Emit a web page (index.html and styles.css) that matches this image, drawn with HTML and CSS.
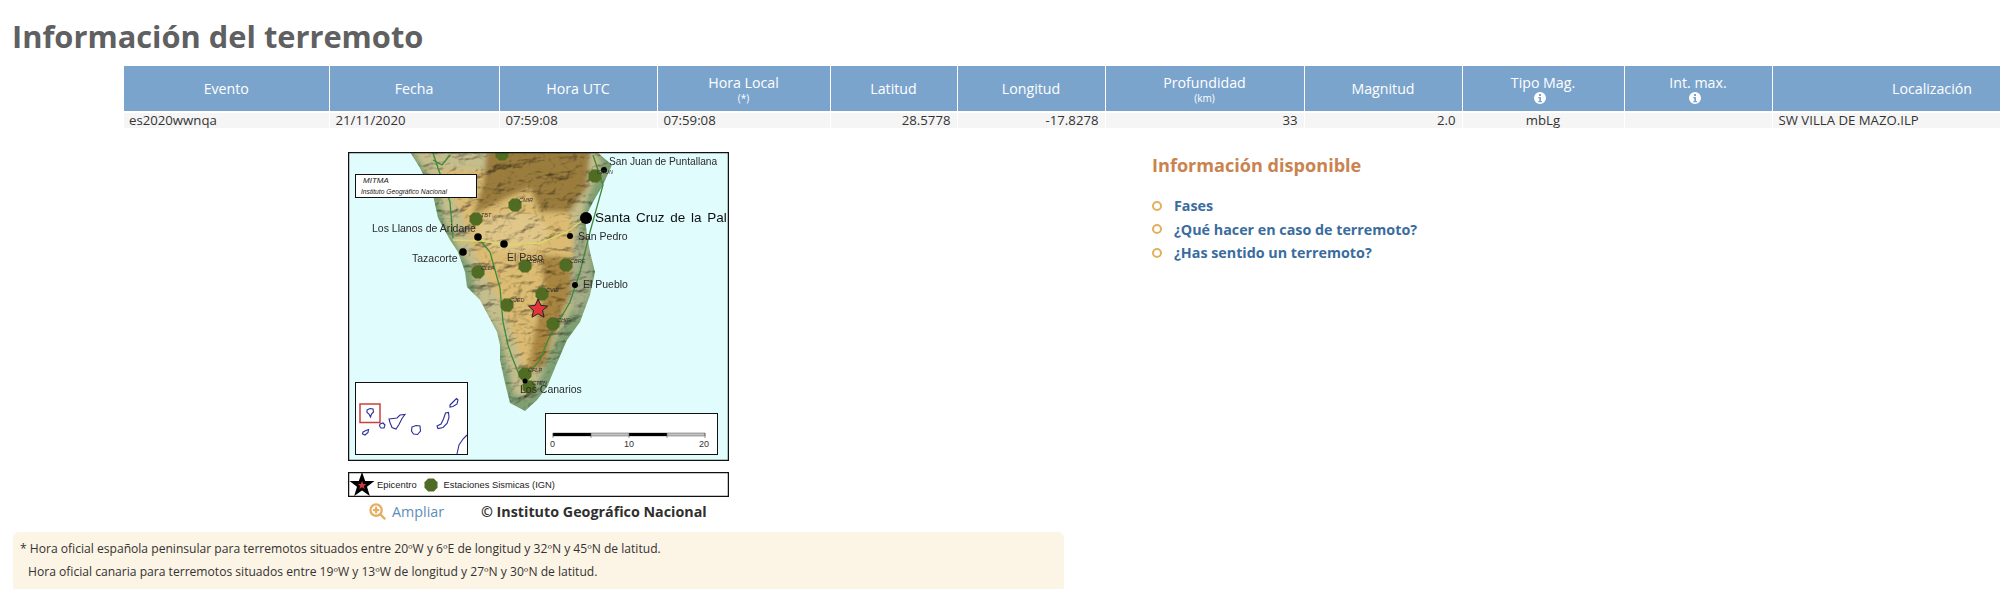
FILE: index.html
```html
<!DOCTYPE html>
<html lang="es">
<head>
<meta charset="utf-8">
<title>Información del terremoto</title>
<link rel="stylesheet" href="styles.css">
</head>
<body>
<h1 class="title">Información del terremoto</h1>
<table class="quake">
<colgroup>
<col class="c1"><col class="c2"><col class="c3"><col class="c4"><col class="c5"><col class="c6"><col class="c7"><col class="c8"><col class="c9"><col class="c10"><col class="c11">
</colgroup>
<thead>
<tr>
<th>Evento</th><th>Fecha</th><th>Hora UTC</th>
<th>Hora Local<small>(*)</small></th>
<th>Latitud</th><th>Longitud</th>
<th>Profundidad<small>(km)</small></th>
<th>Magnitud</th>
<th>Tipo Mag.<svg class="info" viewBox="0 0 12 12"><path fill-rule="evenodd" d="M6 0a6 6 0 1 0 0 12A6 6 0 0 0 6 0zM5 2h2v2H5zM4.300 5H7v4h1v1.200H4.300V9h1V6.200h-1z"/></svg></th>
<th>Int. max.<svg class="info" viewBox="0 0 12 12"><path fill-rule="evenodd" d="M6 0a6 6 0 1 0 0 12A6 6 0 0 0 6 0zM5 2h2v2H5zM4.300 5H7v4h1v1.200H4.300V9h1V6.200h-1z"/></svg></th>
<th>Localización</th>
</tr>
</thead>
<tbody>
<tr>
<td>es2020wwnqa</td><td>21/11/2020</td><td>07:59:08</td><td>07:59:08</td>
<td class="num">28.5778</td><td class="num">-17.8278</td><td class="num">33</td><td class="num">2.0</td>
<td class="mid">mbLg</td><td></td><td>SW VILLA DE MAZO.ILP</td>
</tr>
</tbody>
</table>

<div class="content">
<div class="left">
<div class="figure">
<svg class="map" viewBox="348 152 381 309">
<defs>
<clipPath id="isl"><path d="M410 152L420 168L433 195L438 218L450 240L458 252L465 272L467 287L480 300L497 332L500 345L500 360L505 383L510 403L525 411L537 400L547 387L557 363L567 340L580 322L590 295L595 272L590 252L587 235L585 218L593 202L603 185L612 165L597 152Z"/></clipPath>
<filter id="soft" x="-10%" y="-10%" width="120%" height="120%"><feGaussianBlur stdDeviation="2.500"/></filter>
<filter id="edge" x="-5%" y="-5%" width="110%" height="110%"><feGaussianBlur stdDeviation="0.500"/></filter>
<filter id="relief" x="0" y="0" width="100%" height="100%">
<feTurbulence type="fractalNoise" baseFrequency="0.05 0.09" numOctaves="4" seed="7"/>
<feDiffuseLighting surfaceScale="8" lighting-color="#fff" diffuseConstant="1.250"><feDistantLight azimuth="225" elevation="62"/></feDiffuseLighting>
</filter>
<polygon id="hex" points="-6.500,-2.800 -2.800,-6.500 2.800,-6.500 6.500,-2.800 6.500,2.800 2.800,6.500 -2.800,6.500 -6.500,2.800"/>
</defs>
<rect class="sea" x="348" y="152" width="381" height="309"/>
<g clip-path="url(#isl)">
<rect class="rim" x="400" y="150" width="220" height="265"/>
<g filter="url(#soft)">
<path class="t-sand" d="M412 150L426 172L439 198L445 222L458 248L472 268L476 298L500 335L507 365L514 395L528 398L540 378L556 340L574 305L586 268L580 225L588 197L602 165L596 150Z"/>
<path class="t-tan" d="M440 170L462 215L480 268L500 300L515 340L525 375L535 360L556 315L575 265L572 215L500 170Z"/>
<path class="t-brown" d="M487 150L590 150L587 188L570 212L540 212L530 188L507 198L473 215L483 185Z"/>
<ellipse class="t-light" cx="512" cy="232" rx="36" ry="20"/>
<path class="t-brown2" d="M540 255L570 258L573 288L553 335L545 365L527 375L535 330L545 290Z"/>
<path class="t-gray" d="M574 232L590 232L592 290L578 318L570 300Z"/>
</g>
<rect class="relief" x="400" y="150" width="220" height="265" filter="url(#relief)"/>
</g>
<g filter="url(#edge)">
<path class="road" d="M433 153L438 168L450 202L453 238"/>
<path class="road" d="M478 238L490 252L500 288L503 322L508 345L512 357L520 377"/>
<path class="road" d="M593 155L603 185L590 232L580 272L570 302L548 340L540 360L525 377"/>
<path class="road" d="M433 160L442 165L450 155"/>
<path class="yroad" d="M453 240L483 241L507 245L540 243L567 232L583 220"/>
<g class="st">
<use href="#hex" x="502" y="154"/><use href="#hex" x="595" y="176"/><use href="#hex" x="515" y="205"/><use href="#hex" x="476" y="219"/><use href="#hex" x="478" y="272"/><use href="#hex" x="525" y="266"/><use href="#hex" x="566" y="265"/><use href="#hex" x="542" y="294"/><use href="#hex" x="507" y="305"/><use href="#hex" x="553" y="324"/><use href="#hex" x="525" y="374"/><use href="#hex" x="529" y="387"/>
</g>
<g class="dots">
<circle cx="604" cy="170" r="3"/><circle cx="586" cy="218" r="6"/><circle cx="478" cy="237" r="3.800"/><circle cx="504" cy="244" r="3.800"/><circle cx="463" cy="252" r="3.800"/><circle cx="570" cy="236" r="3"/><circle cx="575" cy="285" r="3"/><circle cx="525" cy="381" r="2.500"/>
</g>
<text class="tiny" x="519" y="202">CMIR</text><text class="tiny" x="481" y="217">TBT</text><text class="tiny" x="481" y="270">CLLA</text><text class="tiny" x="529" y="263">CBRR</text><text class="tiny" x="570" y="263">CBRE</text><text class="tiny" x="546" y="292">CVIE</text><text class="tiny" x="510" y="302">CJED</text><text class="tiny" x="557" y="322">CHIG</text><text class="tiny" x="528" y="372">CFLP</text><text class="tiny" x="532" y="385">CTEN</text><text class="tiny" x="597" y="174">CRUN</text>
<text class="lbl wide" x="609" y="165">San Juan de Puntallana</text>
<text class="big" x="595" y="222">Santa Cruz de la Pal</text>
<text class="lbl" x="372" y="232">Los Llanos de Aridane</text>
<text class="lbl" x="412" y="262">Tazacorte</text>
<text class="lbl" x="578" y="240">San Pedro</text>
<text class="lbl" x="507" y="261">El Paso</text>
<text class="lbl" x="583" y="288">El Pueblo</text>
<text class="lbl" x="520" y="393">Los Canarios</text>
<polygon class="epi" points="538,299 540.800,305.300 547.500,306 542.500,310.500 544,317.200 538,313.800 532,317.200 533.500,310.500 528.500,306 535.200,305.300"/>
</g>
<rect class="box" x="355.500" y="174.500" width="121" height="23"/>
<text class="mitma" x="363" y="183">MITMA</text>
<text class="ign" x="361" y="193.500">Instituto Geográfico Nacional</text>
<rect class="box" x="355.500" y="382.500" width="112" height="72"/>
<rect class="redbox" x="360" y="404" width="20" height="18.500"/>
<g class="isles">
<path d="M367 410l3-1.500 3 .5 .5 3-2 2-1 3-1.500-3-2-1.500z"/>
<path d="M380 424l3-1 2 2-1 3-3 0-1.500-2z"/>
<path d="M389 419l8-1 3-3 5-.5-3 4-3 6-3 4.500-4-1.500-2-5z"/>
<path d="M412 427l4-1.500 4 .5 .5 5-3 3.500-4-.5-2-3z"/>
<path d="M363 432l3-1.500 2.500-1-.5 3-3 2.500-2.500-1z"/>
<path d="M437 426l4-2 2.500-5 2-6 3-.5 .5 5-2 6-4 4-5 1z"/>
<path d="M450 405l4-4 2.500-2.500 1.500 1.500-1 4-4 2.500-3 .5z"/>
<path d="M457 454l2-9 4-6 4-4"/>
</g>
<rect class="box" x="545.500" y="413.500" width="172" height="41"/>
<rect class="barl" x="553" y="433" width="152" height="3"/>
<rect class="bard" x="553" y="433" width="38" height="3"/><rect class="bard" x="629" y="433" width="38" height="3"/>
<path class="tick" d="M553 433v5M591 433v5M629 433v5M667 433v5M705 433v5"/>
<text class="scale" x="550" y="447">0</text><text class="scale" x="624" y="447">10</text><text class="scale" x="699" y="447">20</text>
<rect class="outer" x="348.500" y="152.500" width="380" height="308"/>
</svg>
<svg class="legend" viewBox="348 472 381 25">
<rect class="outer" x="348.500" y="472.500" width="380" height="24"/>
<polygon class="bstar" points="362,472 365.200,481 374.500,481 367,486.800 369.800,496 362,490.500 354.200,496 357,486.800 349.500,481 358.800,481"/>
<polygon class="epi2" points="362,481 363.200,484 366.300,484 363.800,486 364.700,489 362,487.200 359.300,489 360.200,486 357.700,484 360.800,484"/>
<text class="leg" x="377" y="488">Epicentro</text>
<use href="#hex" x="431" y="485" class="st"/>
<text class="leg" x="443.500" y="488">Estaciones Sismicas (IGN)</text>
</svg>
<div class="caption">
<a class="zoomlink"><svg class="zoomicon" viewBox="0 0 18 18"><circle cx="7.500" cy="7.500" r="6"/><path d="M12 12l4.500 4.500M7.500 5v5M5 7.500h5"/></svg>Ampliar</a>
<span class="copy">© Instituto Geográfico Nacional</span>
</div>
</div>
<div class="note">
<p>* Hora oficial española peninsular para terremotos situados entre 20ºW y 6ºE de longitud y 32ºN y 45ºN de latitud.</p>
<p class="indent">Hora oficial canaria para terremotos situados entre 19ºW y 13ºW de longitud y 27ºN y 30ºN de latitud.</p>
</div>
</div>
<aside class="right">
<h2>Información disponible</h2>
<ul>
<li><a>Fases</a></li>
<li><a>¿Qué hacer en caso de terremoto?</a></li>
<li><a>¿Has sentido un terremoto?</a></li>
</ul>
</aside>
</div>
</body>
</html>
```

FILE: styles.css
```css
html, body {
  margin: 0;
  padding: 0;
  height: 589px;
  overflow: hidden;
  background: #fff;
  font-family: "Open Sans", "Liberation Sans", sans-serif;
  color: #333;
}
.title {
  margin: 0;
  padding: 16px 0 0 12px;
  height: 66px;
  box-sizing: border-box;
  font-size: 30.800px;
  line-height: 40px;
  font-weight: 700;
  color: #5f6062;
}
.quake {
  margin-left: 124px;
  width: 1968px;
  table-layout: fixed;
  border-collapse: collapse;
}
.c1 { width: 205px; }
.c2 { width: 170px; }
.c3 { width: 158px; }
.c4 { width: 173px; }
.c5 { width: 127px; }
.c6 { width: 148px; }
.c7 { width: 199px; }
.c8 { width: 158px; }
.c9 { width: 162px; }
.c10 { width: 148px; }
.c11 { width: 320px; }
.quake th {
  height: 45px;
  padding: 0;
  background: #7ba4cd;
  color: #fff;
  font-weight: 400;
  font-size: 14.200px;
  line-height: 19px;
  text-align: center;
  vertical-align: middle;
  border-left: 1px solid #fff;
  border-right: 1px solid #fff;
  border-bottom: 2px solid #fff;
}
.quake th:first-child { border-left: 0; }
.quake th small {
  display: block;
  font-size: 10px;
  line-height: 13px;
}
.info {
  display: block;
  width: 12px;
  height: 12px;
  margin-left: calc(50% - 9px);
  fill: #fff;
}
.quake td {
  height: 15px;
  padding: 0 6px;
  background: #f5f5f5;
  font-size: 13.200px;
  line-height: 15px;
  color: #333;
  white-space: nowrap;
  border-left: 1px solid #fff;
  border-right: 1px solid #fff;
}
.quake td:first-child { border-left: 0; padding-left: 5px; }
.quake .num { text-align: right; }
.quake .mid { text-align: center; }
.content {
  display: flex;
  padding: 24px 0 0 13px;
}
.left { width: 1051px; flex: none; }
.figure {
  width: 381px;
  margin: 0 auto;
}
.map {
  display: block;
  width: 381px;
  height: 309px;
}
.legend {
  display: block;
  width: 381px;
  height: 25px;
  margin-top: 11px;
}
.caption {
  display: flex;
  align-items: center;
  height: 28px;
  white-space: nowrap;
  font-size: 14.300px;
}
.zoomlink {
  display: flex;
  align-items: center;
  margin-left: 21px;
  color: #5b8db8;
  width: 112px;
}
.zoomicon {
  width: 17px;
  height: 17px;
  margin-right: 6px;
  fill: none;
  stroke: #e6ae62;
  stroke-width: 2.400;
  stroke-linecap: round;
}
.copy { font-weight: 700; color: #2f2f2f; }
.note {
  margin-top: 7px;
  height: 60px;
  box-sizing: border-box;
  padding: 5px 7px;
  background: #fcf4e5;
  border-radius: 6px;
  font-size: 12.100px;
  line-height: 23px;
  color: #333;
}
.note p { margin: 0; }
.note .indent { padding-left: 8px; }
.right {
  margin-left: 88px;
  padding-top: 0;
}
.right h2 {
  margin: 0;
  font-size: 18.100px;
  line-height: 27px;
  font-weight: 700;
  color: #c98350;
}
.right ul {
  list-style: none;
  margin: 15px 0 0;
  padding: 0;
}
.right li {
  display: flex;
  align-items: center;
  height: 23.500px;
  font-size: 14.300px;
  font-weight: 700;
  color: #3a6c9e;
}
.right li::before {
  content: "";
  width: 10px;
  height: 10px;
  box-sizing: border-box;
  border: 2px solid #e2b05f;
  border-radius: 50%;
  margin-right: 12px;
  flex: none;
}
/* map artwork */
.sea { fill: #e0fcfd; }
.rim { fill: #7f9f72; }
.t-sand { fill: #c4bd8c; }
.t-tan { fill: #dcbb72; }
.t-brown { fill: #9a7b3e; }
.t-light { fill: #e0c688; }
.t-brown2 { fill: #a8853f; }
.t-gray { fill: #a4ad88; }
.relief { mix-blend-mode: multiply; opacity: .7; }
.road { fill: none; stroke: #3c8a3c; stroke-width: 1.300; }
.yroad { fill: none; stroke: #dcd86a; stroke-width: 1.400; }
.st { fill: #4f6c24; }
.dots { fill: #000; }
.tiny { font: italic 5.500px "Liberation Sans", sans-serif; fill: #333; }
.lbl { font: 10.500px "Liberation Sans", sans-serif; fill: #2b2b2b; }
.wide { font-size: 10.200px; }
.big { font: 13.500px "Liberation Sans", sans-serif; word-spacing: 2px; fill: #111; }
.epi { fill: #e2363a; stroke: #222; stroke-width: 1; }
.box { fill: #fff; stroke: #111; stroke-width: 1; }
.mitma { font: italic 8px "Liberation Sans", sans-serif; fill: #222; }
.ign { font: italic 6.700px "Liberation Sans", sans-serif; fill: #222; }
.redbox { fill: none; stroke: #c8423c; stroke-width: 1.500; }
.isles path { fill: none; stroke: #2a2f9a; stroke-width: 1.100; }
.barl { fill: #c4c4c4; stroke: #333; stroke-width: .4; }
.bard { fill: #000; }
.tick { fill: none; stroke: #555; stroke-width: .6; }
.scale { font: 9px "Liberation Sans", sans-serif; fill: #333; }
.outer { fill: none; stroke: #111; stroke-width: 1.500; }
.bstar { fill: #000; }
.epi2 { fill: #d9383a; }
.leg { font: 9.400px "Liberation Sans", sans-serif; fill: #222; }
```
